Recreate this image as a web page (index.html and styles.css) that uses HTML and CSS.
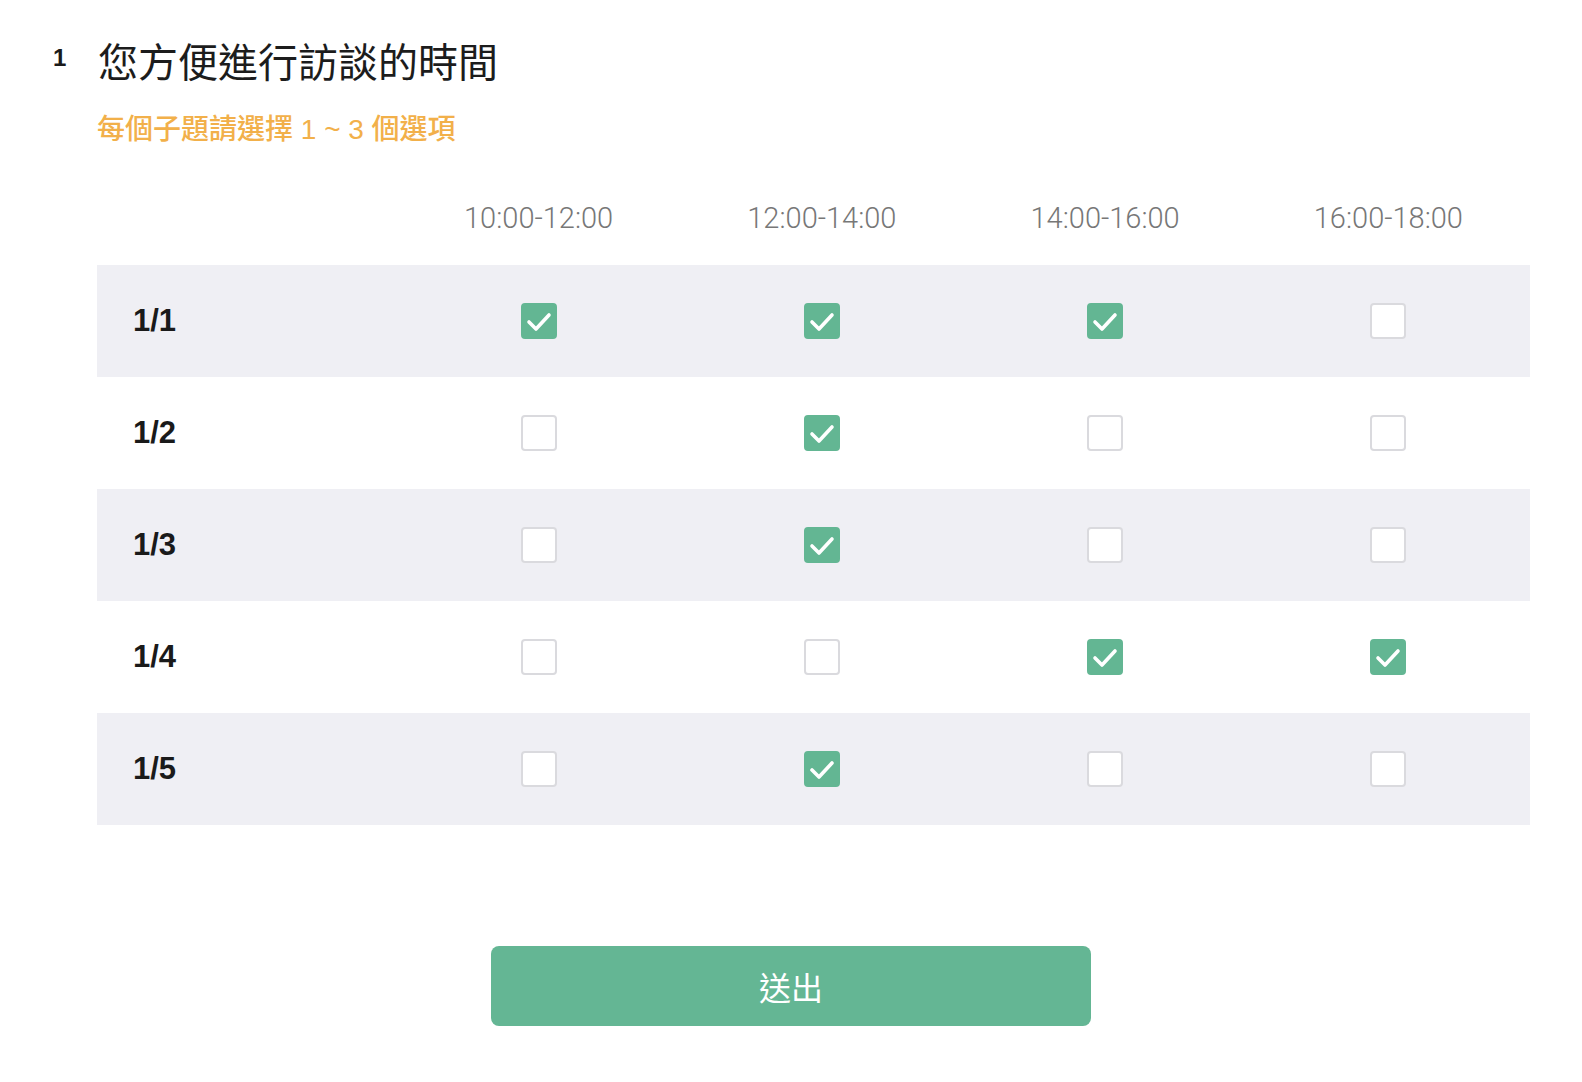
FILE: index.html
```html
<!DOCTYPE html>
<html lang="zh-Hant">

<head>
    <meta charset="UTF-8">
    <meta name="viewport" content="width=device-width, initial-scale=1.0">
    <title>訪談時間</title>
    <link rel="stylesheet" href="styles.css">
</head>

<body>
    <div class="question">
        <div class="q-head">
            <span class="q-num">1</span>
            <h1 class="q-title">您方便進行訪談的時間</h1>
        </div>
        <div class="q-body">
            <p class="q-hint">每個子題請選擇 1 ~ 3 個選項</p>

            <div class="matrix">
                <div class="matrix-row matrix-header">
                    <div class="row-label"></div>
                    <div class="col">10:00-12:00</div>
                    <div class="col">12:00-14:00</div>
                    <div class="col">14:00-16:00</div>
                    <div class="col">16:00-18:00</div>
                </div>
                <div class="matrix-row striped">
                    <div class="row-label">1/1</div>
                    <div class="col"><span class="box checked"></span></div>
                    <div class="col"><span class="box checked"></span></div>
                    <div class="col"><span class="box checked"></span></div>
                    <div class="col"><span class="box"></span></div>
                </div>
                <div class="matrix-row">
                    <div class="row-label">1/2</div>
                    <div class="col"><span class="box"></span></div>
                    <div class="col"><span class="box checked"></span></div>
                    <div class="col"><span class="box"></span></div>
                    <div class="col"><span class="box"></span></div>
                </div>
                <div class="matrix-row striped">
                    <div class="row-label">1/3</div>
                    <div class="col"><span class="box"></span></div>
                    <div class="col"><span class="box checked"></span></div>
                    <div class="col"><span class="box"></span></div>
                    <div class="col"><span class="box"></span></div>
                </div>
                <div class="matrix-row">
                    <div class="row-label">1/4</div>
                    <div class="col"><span class="box"></span></div>
                    <div class="col"><span class="box"></span></div>
                    <div class="col"><span class="box checked"></span></div>
                    <div class="col"><span class="box checked"></span></div>
                </div>
                <div class="matrix-row striped">
                    <div class="row-label">1/5</div>
                    <div class="col"><span class="box"></span></div>
                    <div class="col"><span class="box checked"></span></div>
                    <div class="col"><span class="box"></span></div>
                    <div class="col"><span class="box"></span></div>
                </div>
            </div>
        </div>
    </div>

    <div class="actions">
        <button class="submit-btn">送出</button>
    </div>

    <script>
        const tick = '<svg viewBox="0 0 36 36" width="36" height="36"><polyline points="8,19 15,26 28,12" fill="none" stroke="#fff" stroke-width="3.6" stroke-linecap="round" stroke-linejoin="round"/></svg>';
        document.querySelectorAll('.box.checked').forEach(b => b.innerHTML = tick);
        document.querySelectorAll('.box').forEach(b => {
            b.addEventListener('click', () => {
                b.classList.toggle('checked');
                b.innerHTML = b.classList.contains('checked') ? tick : '';
            });
        });
    </script>
</body>

</html>
```

FILE: styles.css
```css
body {
    margin: 0;
    padding: 0;
    background-color: #ffffff;
    font-family: 'Liberation Sans', 'Noto Sans CJK TC', sans-serif;
    color: #1a1a1a;
}

.question {
    padding: 32px 0 0 53px;
}

.q-head {
    display: flex;
    align-items: center;
}

.q-num {
    width: 45px;
    font-size: 24px;
    font-weight: bold;
    margin-top: -5px;
}

.q-title {
    margin: 0;
    font-family: 'Noto Sans CJK TC', sans-serif;
    font-size: 40px;
    font-weight: 400;
    line-height: 56px;
    color: #1c1c1c;
}

.q-body {
    padding-left: 44px;
}

.q-hint {
    margin: 24px 0 0;
    font-size: 28px;
    font-weight: 500;
    line-height: 36px;
    color: #f2b04a;
}

.matrix {
    margin-top: 23px;
}

.matrix-row {
    display: grid;
    grid-template-columns: 300px repeat(4, 1fr);
    width: 1433px;
    align-items: center;
    height: 112px;
}

.matrix-header {
    height: 94px;
}

.matrix-header .col {
    font-family: 'Roboto', sans-serif;
    font-weight: 300;
    font-size: 29px;
    color: #777777;
}

.striped {
    background-color: #efeff4;
}

.row-label {
    padding-left: 36px;
    font-size: 31px;
    font-weight: bold;
    color: #1a1a1a;
}

.col {
    display: flex;
    justify-content: center;
}

.box {
    width: 32px;
    height: 32px;
    border: 2px solid #dadade;
    border-radius: 4px;
    background-color: #ffffff;
    display: flex;
    align-items: center;
    justify-content: center;
    cursor: pointer;
}

.box.checked {
    border-color: #63b693;
    background-color: #63b693;
}

.box svg {
    flex-shrink: 0;
}

.actions {
    display: flex;
    padding-left: 491px;
    margin-top: 121px;
}

.submit-btn {
    width: 600px;
    height: 80px;
    border: none;
    border-radius: 8px;
    background-color: #64b694;
    color: #ffffff;
    font-family: 'Noto Sans CJK TC', sans-serif;
    font-size: 32px;
    cursor: pointer;
}

.submit-btn:hover {
    background-color: #58a986;
}
```
